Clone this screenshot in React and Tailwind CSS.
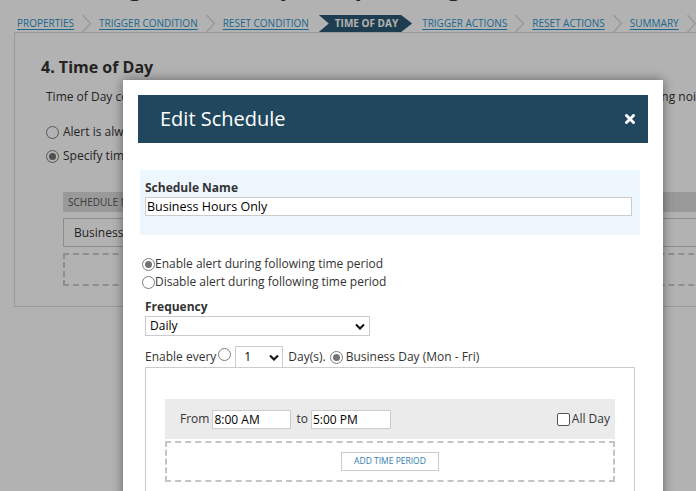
import React from "react";

const steps = [
  { label: "Properties" },
  { label: "Trigger Condition" },
  { label: "Reset Condition" },
  { label: "Time of Day", active: true },
  { label: "Trigger Actions" },
  { label: "Reset Actions" },
  { label: "Summary" },
];

const Chevron = () => (
  <svg width="25" height="17" viewBox="0 0 25 17" className="shrink-0">
    <polyline points="8.5,0 16.5,8.5 8.5,17" fill="none" stroke="#d6d6d6" strokeWidth="1.2" />
  </svg>
);

const Radio = ({ checked }) => (
  <span className="inline-flex h-[13px] w-[13px] shrink-0 items-center justify-center rounded-full border border-[#7a7a7a] bg-white">
    {checked && <span className="h-[7px] w-[7px] rounded-full bg-[#747474]" />}
  </span>
);

const Caret = () => (
  <svg width="10" height="7" viewBox="0 0 10 7" className="shrink-0">
    <polyline points="1,1.5 5,5.5 9,1.5" fill="none" stroke="#1a1a1a" strokeWidth="2.2" />
  </svg>
);

const WizardNav = () => (
  <nav className="mt-[14px] flex h-[18px] w-[720px] items-center border-b border-[#dcdcdc] pl-[3px] text-[10px] whitespace-nowrap">
    {steps.map((step, i) => {
      if (step.active) {
        return (
          <div
            key={step.label}
            className="mr-[10px] flex h-[17px] items-center bg-[#2b5874] pr-[14px] pl-[16px] font-bold text-white uppercase [clip-path:polygon(0_0,calc(100%-11px)_0,100%_50%,calc(100%-11px)_100%,0_100%,10px_50%)]"
          >
            {step.label}
          </div>
        );
      }
      return (
        <React.Fragment key={step.label}>
          <a className="text-[#2a95cd] uppercase underline underline-offset-2">{step.label}</a>
          {!steps[i + 1]?.active && <Chevron />}
          {steps[i + 1]?.active && <span className="w-[10px] shrink-0" />}
        </React.Fragment>
      );
    })}
  </nav>
);

// page that sits behind the dialog
const BackgroundPage = () => (
  <div className="pl-[14px]">
    <h1 className="-mt-[29px] pl-[26px] text-[24px] leading-[30px] font-bold whitespace-nowrap">
      Creating Alert: Group Setup Settings
    </h1>
    <WizardNav />
    <div className="w-[720px] border-b border-l border-[#dcdcdc] pb-[20px]">
      <h2 className="pt-[22px] pl-[26px] text-[16px] leading-[24px] font-bold">4. Time of Day</h2>
      <p className="mt-[9px] pl-[31px] text-[12px] leading-[18px] whitespace-nowrap">
        Time of Day controls when this alert is allowed to trigger. Use a schedule to keep the alert quiet at night, ignoring noise during off hours.
      </p>
      <div className="mt-[17px] flex flex-col gap-[6px] pl-[31px] text-[12px] leading-[18px]">
        <label className="flex items-center gap-[4px]">
          <Radio /> Alert is always active
        </label>
        <label className="flex items-center gap-[4px]">
          <Radio checked /> Specify time schedule
        </label>
      </div>
      <div className="mt-[27px] pl-[48px]">
        <div className="flex h-[20px] items-center bg-[#dcdcdc] pl-[5px] text-[10px] text-[#555] uppercase">
          Schedule Name
        </div>
        <div className="mt-[6px] flex h-[29px] items-center border border-[#cccccc] pl-[10px] text-[12px]">
          Business Hours Only
        </div>
        <div className="mt-[6px] h-[33px] border-2 border-dashed border-[#cccccc]" />
      </div>
    </div>
  </div>
);

const EditScheduleDialog = () => (
  <div className="absolute top-[80px] left-[123px] w-[540px] bg-white pb-[40px] text-[12px] text-[#333] shadow-[0_0_10px_rgba(0,0,0,0.45)]">
    <div className="mx-[15px] mt-[15px] flex h-[48px] items-center justify-between bg-[#21475f] pr-[13px] pl-[22px]">
      <span className="text-[20px] text-white">Edit Schedule</span>
      <svg width="10" height="10" viewBox="0 0 10 10">
        <path d="M1.5 1.5 L8.5 8.5 M8.5 1.5 L1.5 8.5" stroke="#fff" strokeWidth="2.8" strokeLinecap="square" />
      </svg>
    </div>

    <div className="mt-[27px] ml-[17px] h-[65px] w-[500px] bg-[#eef6fe] pt-[10px] pl-[5px]">
      <div className="text-[12px] leading-[16px] font-bold">Schedule Name</div>
      <input
        readOnly
        value="Business Hours Only"
        className="mt-[1px] h-[19px] w-[487px] border border-[#cccccc] bg-white pl-[1px] text-[12.5px] text-black outline-none"
      />
    </div>

    <div className="mt-[20px] ml-[19px] flex flex-col leading-[18px]">
      <label className="flex items-center">
        <Radio checked />
        Enable alert during following time period
      </label>
      <label className="flex items-center">
        <Radio />
        Disable alert during following time period
      </label>
    </div>

    <div className="mt-[8px] ml-[22px]">
      <div className="leading-[16px] font-bold">Frequency</div>
      <div className="mt-[1px] flex h-[20px] w-[225px] items-center justify-between border border-[#cccccc] pr-[4px] pl-[4px] text-black">
        Daily
        <Caret />
      </div>

      <div className="mt-[10px] flex h-[22px] items-center whitespace-nowrap">
        <span>Enable every</span>
        <span className="ml-[2px]"><Radio /></span>
        <div className="ml-[4px] flex h-[22px] w-[48px] items-center justify-between border border-[#cccccc] pr-[3px] pl-[8px] text-black">
          1
          <Caret />
        </div>
        <span className="ml-[5px]">Day(s).</span>
        <span className="ml-[4px]"><Radio checked /></span>
        <span className="ml-[3px]">Business Day (Mon - Fri)</span>
      </div>

      <div className="-mt-[1px] w-[490px] border border-[#cccccc] px-[19px] pt-[31px] pb-[20px]">
        <div className="flex h-[40px] items-center justify-between bg-[#ebebeb] pr-[5px] pl-[15px]">
          <div className="flex items-center">
            <span>From</span>
            <input
              readOnly
              value="8:00 AM"
              className="ml-[3px] h-[19px] w-[79px] border border-[#cccccc] bg-white pl-[1px] text-black outline-none"
            />
            <span className="ml-[5px]">to</span>
            <input
              readOnly
              value="5:00 PM"
              className="ml-[3px] h-[19px] w-[80px] border border-[#cccccc] bg-white pl-[1px] text-black outline-none"
            />
          </div>
          <label className="flex items-center gap-[2px]">
            <span className="h-[13px] w-[13px] rounded-[2px] border border-[#555] bg-white" />
            All Day
          </label>
        </div>
        <div className="mt-[2px] flex h-[41px] items-center justify-center border-2 border-dashed border-[#c4c4c4]">
          <button className="h-[19px] w-[98px] border border-[#cccccc] bg-white text-[8.5px] text-[#2f7bb0] uppercase">
            Add Time Period
          </button>
        </div>
      </div>
    </div>
  </div>
);

export default function App() {
  return (
    <div className="relative h-[491px] w-[696px] overflow-hidden bg-white font-['Open_Sans',sans-serif] text-[#333]">
      <BackgroundPage />
      <div className="absolute inset-0 bg-black/30" />
      <EditScheduleDialog />
    </div>
  );
}
